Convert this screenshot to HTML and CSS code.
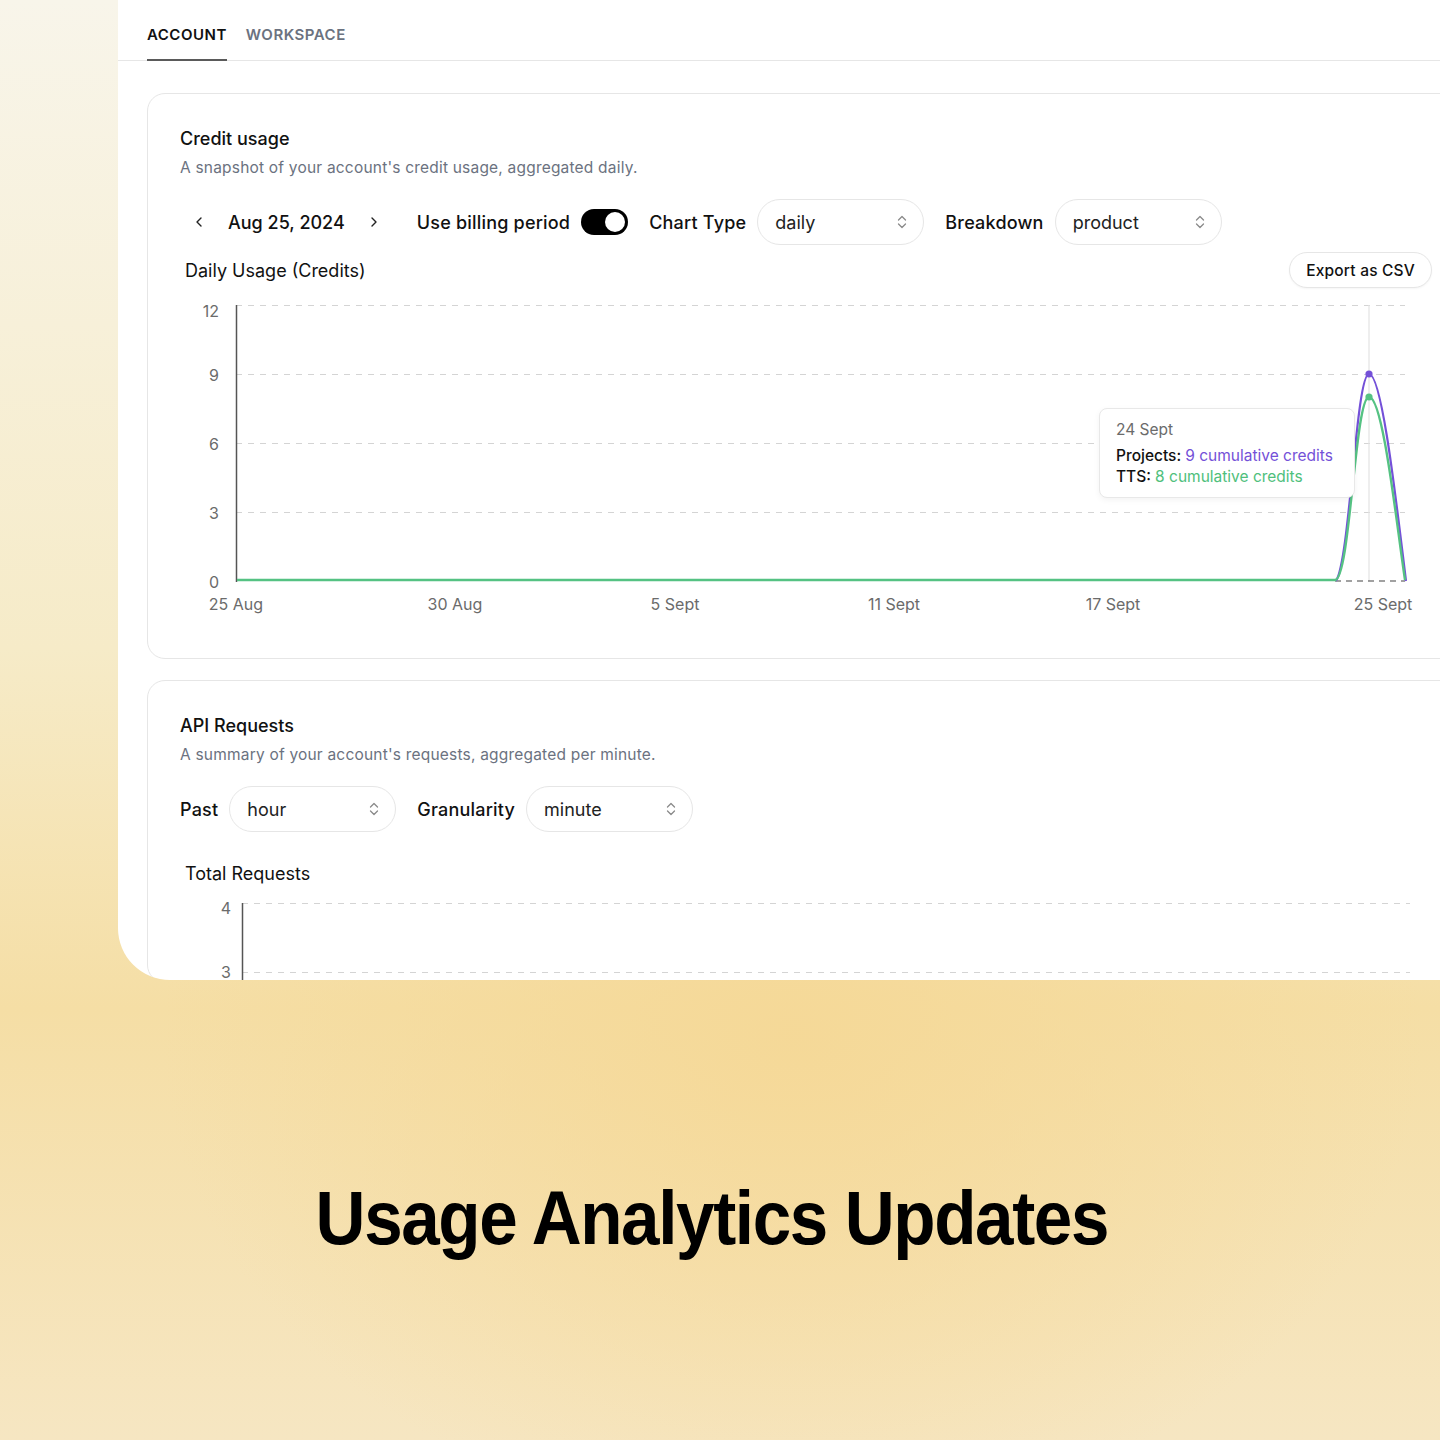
FILE: index.html
```html
<!DOCTYPE html>
<html lang="en">
<head>
  <meta charset="utf-8" />
  <title>Usage Analytics Updates</title>
  <link rel="stylesheet" href="styles.css">
</head>
<body>
  <div class="page">

    <div class="panel">
      <nav class="tabs">
        <a class="tab active">ACCOUNT</a>
        <a class="tab">WORKSPACE</a>
      </nav>

      <!-- Credit usage -->
      <section class="card">
        <h2 class="card-title">Credit usage</h2>
        <p class="card-sub">A snapshot of your account's credit usage, aggregated daily.</p>

        <div class="controls">
          <div class="date-nav">
            <svg class="chev" width="14" height="14" viewBox="0 0 14 14"><path d="M9 3 L5 7 L9 11" fill="none" stroke="#222" stroke-width="1.4" stroke-linecap="round" stroke-linejoin="round"/></svg>
            <span class="date">Aug 25, 2024</span>
            <svg class="chev" width="14" height="14" viewBox="0 0 14 14"><path d="M5 3 L9 7 L5 11" fill="none" stroke="#222" stroke-width="1.4" stroke-linecap="round" stroke-linejoin="round"/></svg>
          </div>
          <label class="ctl-label">Use billing period</label>
          <span class="toggle"><span class="knob"></span></span>
          <label class="ctl-label ml">Chart Type</label>
          <div class="select"><span>daily</span>
            <svg width="12" height="18" viewBox="0 0 12 18"><path d="M2.5 7 L6 3.5 L9.5 7 M2.5 11 L6 14.5 L9.5 11" fill="none" stroke="#8a8a8a" stroke-width="1.3" stroke-linecap="round" stroke-linejoin="round"/></svg>
          </div>
          <label class="ctl-label ml">Breakdown</label>
          <div class="select"><span>product</span>
            <svg width="12" height="18" viewBox="0 0 12 18"><path d="M2.5 7 L6 3.5 L9.5 7 M2.5 11 L6 14.5 L9.5 11" fill="none" stroke="#8a8a8a" stroke-width="1.3" stroke-linecap="round" stroke-linejoin="round"/></svg>
          </div>
        </div>

        <div class="chart-head">
          <h3 class="chart-title">Daily Usage (Credits)</h3>
          <button class="btn">Export as CSV</button>
        </div>

        <div class="chart-wrap">
          <svg class="chart" width="1260" height="330" viewBox="180 292 1260 330">
            <g stroke="#d4d4d4" stroke-width="1" stroke-dasharray="6 6">
              <line x1="236" y1="305.5" x2="1405" y2="305.5"/>
              <line x1="236" y1="374.5" x2="1405" y2="374.5"/>
              <line x1="236" y1="443.5" x2="1405" y2="443.5"/>
              <line x1="236" y1="512.5" x2="1405" y2="512.5"/>
            </g>
            <line x1="1369" y1="305" x2="1369" y2="581" stroke="#e3e3e3" stroke-width="1.2"/>
            <line x1="1335" y1="581" x2="1405" y2="581" stroke="#444" stroke-width="1.2" stroke-dasharray="6 5"/>
            <line x1="236.5" y1="305" x2="236.5" y2="582" stroke="#555" stroke-width="1.5"/>
            <g class="tick" text-anchor="end">
              <text x="219" y="317">12</text>
              <text x="219" y="381">9</text>
              <text x="219" y="450">6</text>
              <text x="219" y="519">3</text>
              <text x="219" y="588">0</text>
            </g>
            <g class="tick" text-anchor="middle">
              <text x="236" y="610">25 Aug</text>
              <text x="455" y="610">30 Aug</text>
              <text x="675" y="610">5 Sept</text>
              <text x="894" y="610">11 Sept</text>
              <text x="1113" y="610">17 Sept</text>
              <text x="1383" y="610">25 Sept</text>
            </g>
            <path d="M1336 581 C1350 560 1356 374 1369 374 C1382 374 1396 500 1406 581" fill="none" stroke="#7451d8" stroke-width="2.2"/>
            <path d="M237 580 L1335 580 C1350 580 1355 397 1369 397 C1383 397 1396 520 1405 580" fill="none" stroke="#55c283" stroke-width="2.4"/>
            <circle cx="1369" cy="374" r="3.6" fill="#7451d8"/>
            <circle cx="1369" cy="397" r="3.6" fill="#55c283"/>
          </svg>
          <div class="tooltip">
            <div class="tt-date">24 Sept</div>
            <div class="tt-row">Projects: <span class="purple">9 cumulative credits</span></div>
            <div class="tt-row">TTS: <span class="green">8 cumulative credits</span></div>
          </div>
        </div>
      </section>

      <!-- API requests -->
      <section class="card">
        <h2 class="card-title">API Requests</h2>
        <p class="card-sub">A summary of your account's requests, aggregated per minute.</p>

        <div class="controls">
          <label class="ctl-label">Past</label>
          <div class="select"><span>hour</span>
            <svg width="12" height="18" viewBox="0 0 12 18"><path d="M2.5 7 L6 3.5 L9.5 7 M2.5 11 L6 14.5 L9.5 11" fill="none" stroke="#8a8a8a" stroke-width="1.3" stroke-linecap="round" stroke-linejoin="round"/></svg>
          </div>
          <label class="ctl-label ml">Granularity</label>
          <div class="select"><span>minute</span>
            <svg width="12" height="18" viewBox="0 0 12 18"><path d="M2.5 7 L6 3.5 L9.5 7 M2.5 11 L6 14.5 L9.5 11" fill="none" stroke="#8a8a8a" stroke-width="1.3" stroke-linecap="round" stroke-linejoin="round"/></svg>
          </div>
        </div>

        <h3 class="chart-title req">Total Requests</h3>
        <svg class="chart" width="1260" height="90" viewBox="180 892 1260 90">
          <g stroke="#d4d4d4" stroke-width="1" stroke-dasharray="6 6">
            <line x1="242" y1="903.5" x2="1410" y2="903.5"/>
            <line x1="242" y1="972.5" x2="1410" y2="972.5"/>
          </g>
          <line x1="242.5" y1="903" x2="242.5" y2="982" stroke="#555" stroke-width="1.5"/>
          <g class="tick" text-anchor="end">
            <text x="231" y="914">4</text>
            <text x="231" y="978">3</text>
          </g>
        </svg>
      </section>
    </div>

    <h1 class="headline">Usage Analytics Updates</h1>
  </div>
</body>
</html>
```

FILE: styles.css
```css
body { margin: 0; font-family: Inter, "Noto Sans", sans-serif; color: #111; }

.page {
  width: 1440px; height: 1440px; overflow: hidden;
  background:
    radial-gradient(ellipse 900px 700px at 55% 72%, rgba(245, 216, 150, 0.9), rgba(245, 216, 150, 0) 70%),
    linear-gradient(180deg, #f8f5ea 0%, #f6ebc8 45%, #f5dea5 70%, #f6e6c2 100%);
}

.panel {
  margin-left: 118px; height: 980px; background: #fff;
  border-bottom-left-radius: 52px; overflow: hidden;
}

.tabs { display: flex; gap: 19px; padding: 0 0 0 29px; border-bottom: 1px solid #e6e6e6; height: 60px; }
.tab { font-size: 15px; font-weight: 600; letter-spacing: 0.5px; color: #6b7280; padding-top: 25px; box-sizing: border-box; height: 61px; }
.tab.active { color: #111; border-bottom: 2px solid #5a5a5a; }

.card {
  width: 1330px; margin: 32px 0 0 29px; box-sizing: border-box;
  border: 1px solid #e6e6e6; border-radius: 18px; padding: 33px 32px 0;
  position: relative;
}
.card + .card { margin-top: 21px; }
.card:first-of-type { height: 566px; }

.card-title { margin: 0; font-size: 18px; font-weight: 500; line-height: 24px; }
.card-sub { margin: 7px 0 0; font-size: 15.5px; line-height: 20px; color: #6b7280; letter-spacing: 0.2px; }

.controls { display: flex; align-items: center; margin-top: 21px; height: 46px; }
.date-nav { display: flex; align-items: center; gap: 22px; margin-left: 12px; margin-right: 36px; }
.date { font-size: 18px; font-weight: 500; }
.ctl-label { font-size: 18px; font-weight: 500; letter-spacing: 0.2px; margin-right: 11px; }
.ctl-label.ml { margin-left: 21px; }

.toggle { width: 47px; height: 26px; border-radius: 13px; background: #000; position: relative; display: inline-block; }
.knob { position: absolute; right: 3px; top: 3px; width: 20px; height: 20px; border-radius: 50%; background: #fff; }

.select {
  width: 167px; height: 46px; box-sizing: border-box; border: 1px solid #e6e6e6; border-radius: 23px;
  display: flex; align-items: center; justify-content: space-between; padding: 0 15px 0 17px;
  font-size: 18px; color: #222;
}

.chart-head {
  display: flex; align-items: center; justify-content: space-between; box-sizing: border-box;
  margin-top: 7px; height: 36px; padding-left: 5px; width: 1252px;
}
.chart-title { margin: 0; font-size: 18px; font-weight: 400; }
.chart-title.req { margin-top: 30px; padding-left: 5px; line-height: 24px; }
.btn {
  font-family: inherit; font-size: 15.5px; font-weight: 500; letter-spacing: 0.2px; color: #111; background: #fff;
  border: 1px solid #e6e6e6; border-radius: 18px; height: 36px; padding: 0 16px;
  box-shadow: 0 1px 2px rgba(0,0,0,0.04);
}

.chart-wrap { position: relative; margin-top: 4px; }
.chart { display: block; font-family: Inter, sans-serif; }
.card + .card .chart { margin-top: 6px; }
.tick text { font-size: 16px; fill: #6b6b6b; }

.tooltip {
  position: absolute; left: 919px; top: 116px; width: 256px; height: 90px; box-sizing: border-box;
  background: #fff; border: 1px solid #e8e8e8; border-radius: 8px; padding: 10px 8px 10px 16px;
  box-shadow: 0 2px 6px rgba(0,0,0,0.05); font-size: 15.5px; line-height: 22px; white-space: nowrap;
}
.tt-date { color: #6b6b6b; margin-bottom: 4px; }
.tt-row { font-weight: 500; color: #111; line-height: 21px; }
.purple { color: #7451d8; font-weight: 400; }
.green { color: #4fc07c; font-weight: 400; }

.headline {
  margin: 0; padding: 198px 18px 0 0; text-align: center;
  font-family: "Liberation Sans", Arial, sans-serif; font-weight: 700;
  font-size: 76px; letter-spacing: -1.5px; color: #000; line-height: 80px;
  transform: scaleX(0.91);
}
```
